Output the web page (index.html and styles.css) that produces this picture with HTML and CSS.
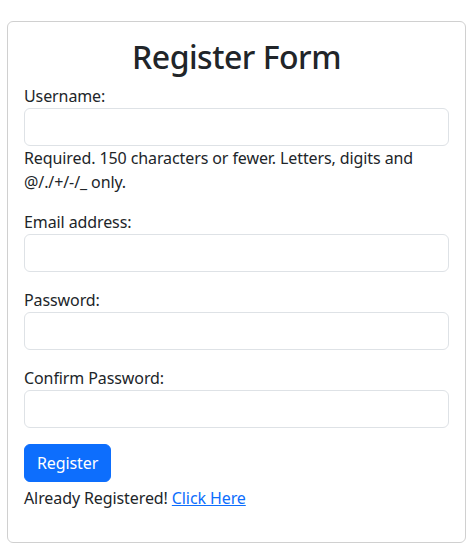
FILE: index.html
```html
<!DOCTYPE html>
<html lang="en">
<head>
<meta charset="utf-8">
<title>Register</title>
<link rel="stylesheet" href="styles.css">
</head>
<body>
<div class="page">
  <div class="card">
    <h2 class="title">Register Form</h2>
    <form class="form">
      <div class="field">
        <label class="label" for="username">Username:</label>
        <input class="input" id="username" type="text">
        <div class="help">Required. 150 characters or fewer. Letters, digits and @/./+/-/_ only.</div>
      </div>
      <div class="field">
        <label class="label" for="email">Email address:</label>
        <input class="input" id="email" type="email">
      </div>
      <div class="field">
        <label class="label" for="password">Password:</label>
        <input class="input" id="password" type="password">
      </div>
      <div class="field">
        <label class="label" for="confirm">Confirm Password:</label>
        <input class="input" id="confirm" type="password">
      </div>
      <button class="btn" type="button">Register</button>
    </form>
    <p class="note">Already Registered! <a class="link" href="#">Click Here</a></p>
  </div>
</div>
</body>
</html>
```
FILE: styles.css
```css
* { box-sizing: border-box; }
html, body { margin: 0; padding: 0; background: #fff; }
body {
  font-family: "Noto Sans", "Open Sans", sans-serif;
  font-size: 16px;
  line-height: 1.5;
  color: #212529;
  letter-spacing: -0.1px;
}
.page { padding: 21px 10px 0 7px; }
.card {
  border: 1px solid #d0d0d0;
  border-radius: 6px;
  padding: 16px 16px 16px;
}
.title {
  margin: 0 0 8px;
  font-size: 32px;
  font-weight: 500;
  line-height: 1.2;
  text-align: center;
  letter-spacing: -0.5px;
}
.form { display: flex; flex-direction: column; align-items: flex-start; }
.field { display: flex; flex-direction: column; width: 100%; margin-bottom: 16px; }
.label { display: block; }
.input {
  display: block;
  width: 100%;
  height: 38px;
  border: 1px solid #dee2e6;
  border-radius: 6px;
  background: #fff;
  padding: 6px 12px;
  font: inherit;
  margin: 0;
}
.help { line-height: 24px; }
.btn {
  font: inherit;
  letter-spacing: -0.1px;
  height: 38px;
  padding: 0 12px;
  border: 1px solid #0d6efd;
  border-radius: 6px;
  background: #0d6efd;
  color: #fff;
  margin: 0;
}
.note { margin: 4px 0 16px; }
.link { color: #0d6efd; text-decoration: underline; }
```
